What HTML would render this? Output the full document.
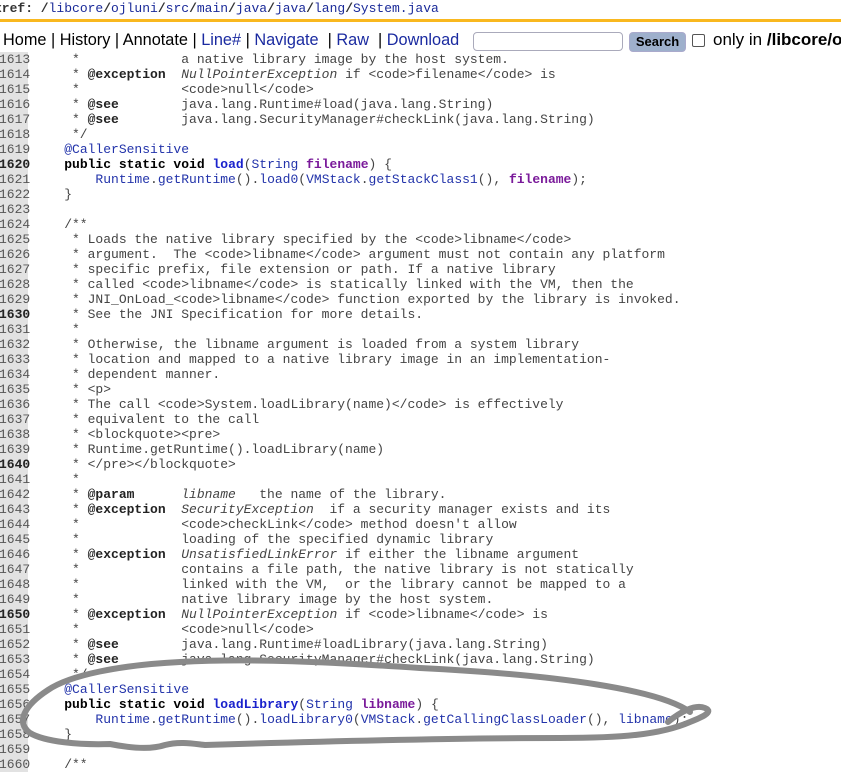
<!DOCTYPE html>
<html><head><style>
body{margin:0;width:841px;height:765px;overflow:hidden;background:#fff;position:relative;font-family:"Liberation Mono",monospace}
.xref{position:absolute;left:-6px;top:1px;font-size:13px;color:#333;font-weight:bold;white-space:pre}
.xref a{color:#1a2a99;font-weight:normal}
.bar{position:absolute;left:0;top:19px;width:841px;height:3px;background:#f9b81f}
.nav{position:absolute;left:3px;top:31px;font-family:"Liberation Sans",sans-serif;font-size:16.3px;white-space:nowrap;color:#000}
.nav .l{color:#1a2aa0}
.inp{position:absolute;left:473px;top:32px;width:148px;height:17px;border:1px solid #aab;border-radius:4px}
.btn{position:absolute;left:629px;top:32px;width:55px;height:18px;background:#9eb0cc;border:1px solid #aac;border-radius:4px;font:bold 13px "Liberation Sans",sans-serif;text-align:center;line-height:18px}
.cb{position:absolute;left:692px;top:34px;width:11px;height:11px;border:1px solid #555;border-radius:2px}
.only{position:absolute;left:713px;top:30px;font:17px "Liberation Sans",sans-serif;white-space:nowrap}
.nums{position:absolute;left:0;top:52px;width:28px;height:720px;background:#e2e2e2}
pre{margin:0;position:absolute;top:52px;font-family:"Liberation Mono",monospace;font-size:13px;line-height:15px;color:#444}
.n{left:-1px;color:#555}
.c{left:33px}
b{color:#222}
.k{font-weight:bold;color:#000}
.bl{color:#2233aa}
.fn{color:#1a22cc;font-weight:bold}
.pu{color:#7a1a9a;font-weight:bold}
i{color:#444}
</style></head><body>
<div class="xref">xref: /<a>libcore</a>/<a>ojluni</a>/<a>src</a>/<a>main</a>/<a>java</a>/<a>java</a>/<a>lang</a>/<a>System.java</a></div>
<div class="bar"></div>
<div class="nav">Home | History | Annotate | <span class="l">Line#</span> | <span class="l">Navigate</span> &nbsp;| <span class="l">Raw</span> &nbsp;| <span class="l">Download</span></div>
<div class="inp"></div><div class="btn">Search</div><div class="cb"></div>
<div class="only">only in <b style="color:#000">/libcore/o</b></div>
<div class="nums"></div>
<pre class="n">1613
1614
1615
1616
1617
1618
1619
<b>1620</b>
1621
1622
1623
1624
1625
1626
1627
1628
1629
<b>1630</b>
1631
1632
1633
1634
1635
1636
1637
1638
1639
<b>1640</b>
1641
1642
1643
1644
1645
1646
1647
1648
1649
<b>1650</b>
1651
1652
1653
1654
1655
1656
1657
1658
1659
1660</pre>
<pre class="c">     *             a native library image by the host system.
     * <b>@exception</b>  <i>NullPointerException</i> if &lt;code&gt;filename&lt;/code&gt; is
     *             &lt;code&gt;null&lt;/code&gt;
     * <b>@see</b>        java.lang.Runtime#load(java.lang.String)
     * <b>@see</b>        java.lang.SecurityManager#checkLink(java.lang.String)
     */
    <span class="bl">@CallerSensitive</span>
    <span class="k">public static void</span> <span class="fn">load</span>(<span class="bl">String</span> <span class="pu">filename</span>) {
        <span class="bl">Runtime</span>.<span class="bl">getRuntime</span>().<span class="bl">load0</span>(<span class="bl">VMStack</span>.<span class="bl">getStackClass1</span>(), <span class="pu">filename</span>);
    }

    /**
     * Loads the native library specified by the &lt;code&gt;libname&lt;/code&gt;
     * argument.  The &lt;code&gt;libname&lt;/code&gt; argument must not contain any platform
     * specific prefix, file extension or path. If a native library
     * called &lt;code&gt;libname&lt;/code&gt; is statically linked with the VM, then the
     * JNI_OnLoad_&lt;code&gt;libname&lt;/code&gt; function exported by the library is invoked.
     * See the JNI Specification for more details.
     *
     * Otherwise, the libname argument is loaded from a system library
     * location and mapped to a native library image in an implementation-
     * dependent manner.
     * &lt;p&gt;
     * The call &lt;code&gt;System.loadLibrary(name)&lt;/code&gt; is effectively
     * equivalent to the call
     * &lt;blockquote&gt;&lt;pre&gt;
     * Runtime.getRuntime().loadLibrary(name)
     * &lt;/pre&gt;&lt;/blockquote&gt;
     *
     * <b>@param</b>      <i>libname</i>   the name of the library.
     * <b>@exception</b>  <i>SecurityException</i>  if a security manager exists and its
     *             &lt;code&gt;checkLink&lt;/code&gt; method doesn't allow
     *             loading of the specified dynamic library
     * <b>@exception</b>  <i>UnsatisfiedLinkError</i> if either the libname argument
     *             contains a file path, the native library is not statically
     *             linked with the VM,  or the library cannot be mapped to a
     *             native library image by the host system.
     * <b>@exception</b>  <i>NullPointerException</i> if &lt;code&gt;libname&lt;/code&gt; is
     *             &lt;code&gt;null&lt;/code&gt;
     * <b>@see</b>        java.lang.Runtime#loadLibrary(java.lang.String)
     * <b>@see</b>        java.lang.SecurityManager#checkLink(java.lang.String)
     */
    <span class="bl">@CallerSensitive</span>
    <span class="k">public static void</span> <span class="fn">loadLibrary</span>(<span class="bl">String</span> <span class="pu">libname</span>) {
        <span class="bl">Runtime</span>.<span class="bl">getRuntime</span>().<span class="bl">loadLibrary0</span>(<span class="bl">VMStack</span>.<span class="bl">getCallingClassLoader</span>(), <span class="bl">libname</span>);
    }

    /**</pre>
<svg style="position:absolute;left:0;top:0" width="841" height="765"><path d="M205,745 C300,742 450,738 560,738 C620,738 660,735 690,722 C700,718 715,712 705,708 C695,704 680,712 668,722 M690,712 C660,690 560,675 420,668 C330,662 250,658 180,662 C120,665 70,675 48,690 C25,705 15,722 30,733 C45,742 80,745 110,744 C130,748 150,750 165,745 C180,741 195,744 205,745" fill="none" stroke="#8a8a8a" stroke-width="6" stroke-linecap="round"/></svg>
</body></html>
